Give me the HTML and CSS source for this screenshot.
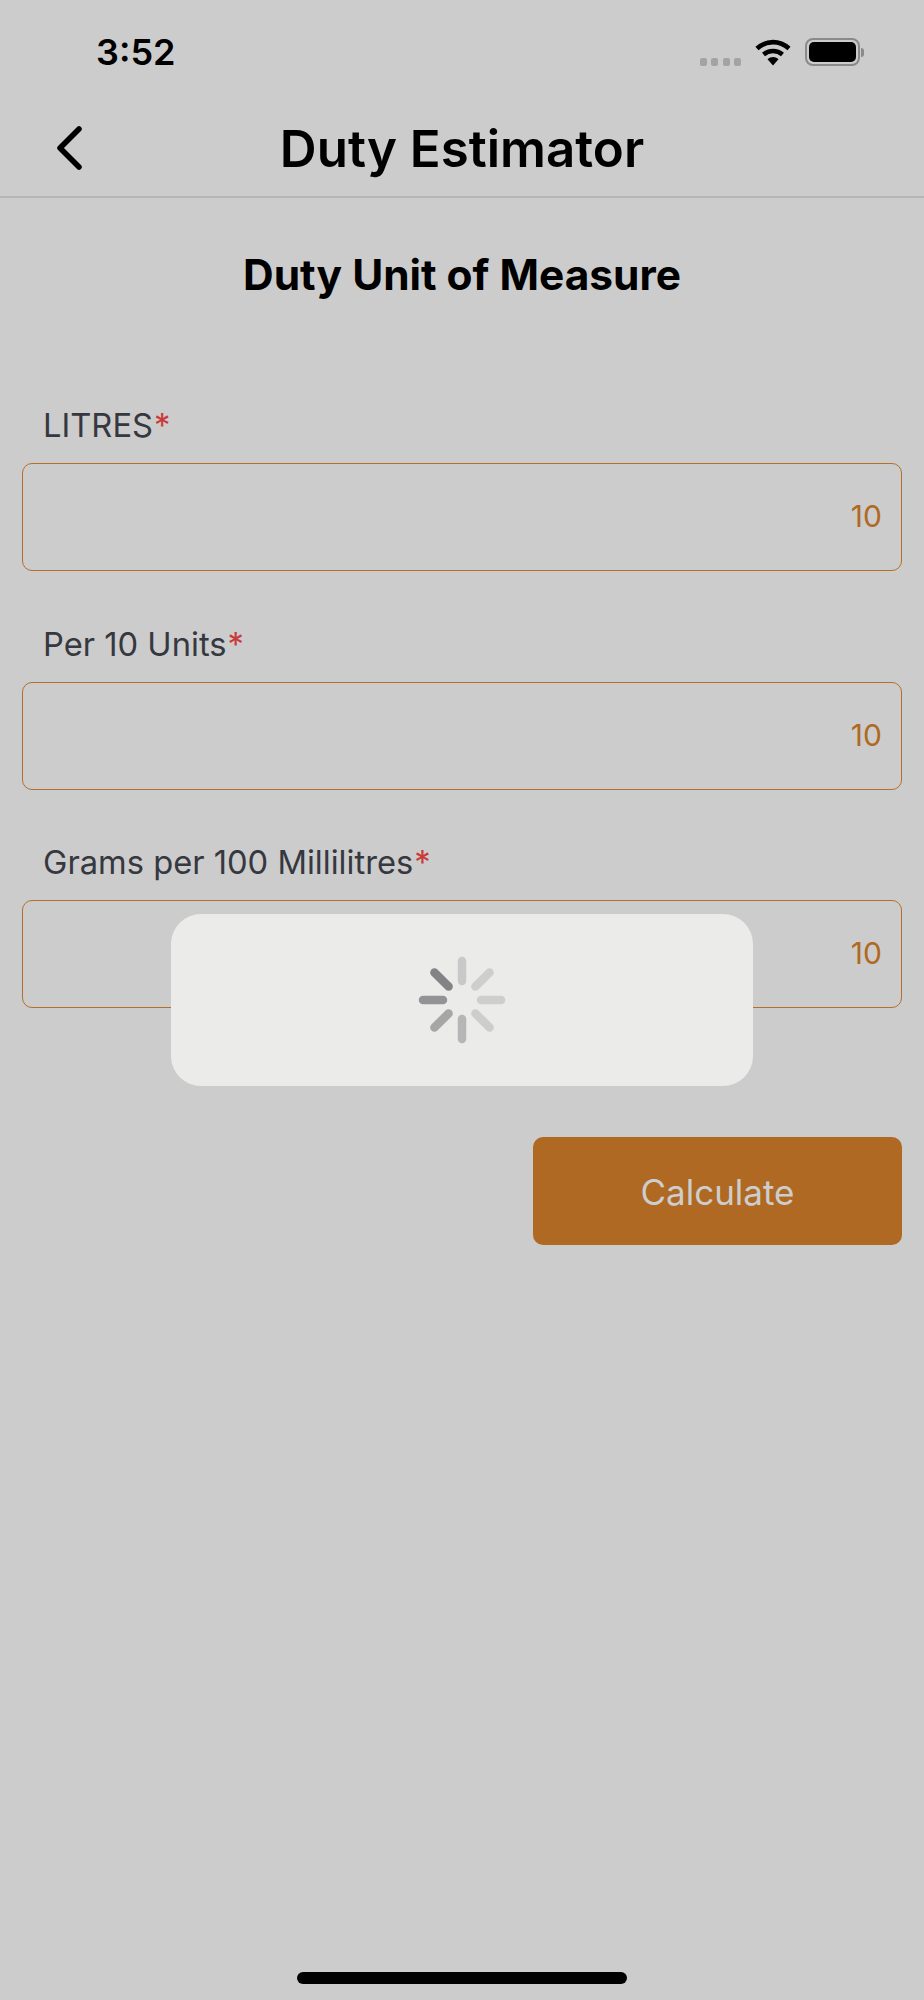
FILE: index.html
```html
<!DOCTYPE html>
<html lang="en">
<head>
    <meta charset="UTF-8">
    <meta name="viewport" content="width=device-width, initial-scale=1.0">
    <title>Duty Estimator</title>
    <link rel="stylesheet" href="styles.css">
</head>
<body>

<div class="screen">
    <div class="status-bar">
        <span class="time">3:52</span>
        <div class="status-icons">
            <div class="signal"><i></i><i></i><i></i><i></i></div>
            <svg class="wifi" width="36" height="27" viewBox="0 0 36 27">
                <path d="M2 9.5C11.5 1 24.500 1 34 9.500" fill="none" stroke="#000" stroke-width="4.600"/>
                <path d="M8.500 15.500C14 10.800 22 10.800 27.500 15.500" fill="none" stroke="#000" stroke-width="4.600"/>
                <path d="M12.500 20.200C15.800 17.300 20.200 17.300 23.500 20.200L18 26.500Z" fill="#000"/>
            </svg>
            <div class="battery"><div class="battery-level"></div></div>
            <div class="battery-tip"></div>
        </div>
    </div>

    <div class="nav-bar">
        <svg class="back" width="26" height="44" viewBox="0 0 26 44">
            <path d="M23 3L4 22L23 41" fill="none" stroke="#000" stroke-width="5.500" stroke-linecap="round" stroke-linejoin="round"/>
        </svg>
        <h1>Duty Estimator</h1>
    </div>

    <h2>Duty Unit of Measure</h2>

    <div class="form">
        <div class="input-group">
            <label for="litres">LITRES<span class="req">*</span></label>
            <input type="text" id="litres" value="10">
        </div>
        <div class="input-group">
            <label for="units">Per 10 Units<span class="req">*</span></label>
            <input type="text" id="units" value="10">
        </div>
        <div class="input-group">
            <label for="grams">Grams per 100 Millilitres<span class="req">*</span></label>
            <input type="text" id="grams" value="10">
        </div>
        <button>Calculate</button>
    </div>

    <div class="home-indicator"></div>

    <!-- loading popup sits over the form -->
    <div class="loader">
        <svg width="90" height="90" viewBox="-45 -45 90 90">
            <g stroke-width="8.500" stroke-linecap="round">
                <line y1="-19" y2="-39" stroke="#c9c9c9"/>
                <line y1="-19" y2="-39" stroke="#cecece" transform="rotate(45)"/>
                <line y1="-19" y2="-39" stroke="#cecece" transform="rotate(90)"/>
                <line y1="-19" y2="-39" stroke="#cdcdcd" transform="rotate(135)"/>
                <line y1="-19" y2="-39" stroke="#b6b6b6" transform="rotate(180)"/>
                <line y1="-19" y2="-39" stroke="#a6a6a7" transform="rotate(225)"/>
                <line y1="-19" y2="-39" stroke="#939396" transform="rotate(270)"/>
                <line y1="-19" y2="-39" stroke="#838386" transform="rotate(315)"/>
            </g>
        </svg>
    </div>
</div>

</body>
</html>
```

FILE: styles.css
```css
body {
    margin: 0;
    font-family: 'Inter', 'Liberation Sans', sans-serif;
    background-color: #cccccc;
}
.screen {
    position: relative;
    height: 2000px;
    display: flex;
    flex-direction: column;
    overflow: hidden;
}
.status-bar {
    height: 104px;
    display: flex;
    justify-content: space-between;
    align-items: flex-start;
    padding: 0 60px 0 96px;
    flex-shrink: 0;
    box-sizing: border-box;
}
.time {
    margin-top: 30px;
    font-size: 36px;
    line-height: 44px;
    font-weight: 600;
    color: #000;
}
.status-icons {
    display: flex;
    align-items: flex-start;
    margin-top: 38px;
}
.signal {
    display: flex;
    gap: 4.500px;
    margin-top: 20px;
    margin-right: 14px;
}
.signal i {
    width: 7px;
    height: 8px;
    border-radius: 2px;
    background-color: #a3a3a3;
}
.wifi {
    margin-top: 1px;
    margin-right: 14px;
}
.battery {
    width: 55px;
    height: 28px;
    box-sizing: border-box;
    border: 2px solid #8a8a8a;
    border-radius: 8px;
    padding: 2px;
}
.battery-level {
    height: 100%;
    background-color: #000;
    border-radius: 5px;
}
.battery-tip {
    width: 3px;
    height: 9px;
    margin-top: 10px;
    margin-left: 1px;
    background-color: #8a8a8a;
    border-radius: 0 4px 4px 0;
}
.nav-bar {
    height: 92px;
    position: relative;
    display: flex;
    justify-content: center;
    align-items: center;
    border-bottom: 2px solid #b6b6b6;
    flex-shrink: 0;
}
.back {
    position: absolute;
    left: 56px;
    top: 22px;
}
h1 {
    margin: 0 0 3px;
    font-size: 51px;
    font-weight: 600;
    color: #000;
}
h2 {
    margin: 0;
    padding-top: 53px;
    text-align: center;
    font-size: 42.400px;
    line-height: 48px;
    font-weight: 700;
    color: #000;
}
.form {
    display: flex;
    flex-direction: column;
    padding: 0 22px;
    margin-top: 107px;
}
.input-group {
    margin-bottom: 53.500px;
}
label {
    display: block;
    padding-left: 21px;
    margin-bottom: 18px;
    font-size: 32.700px;
    line-height: 39px;
    color: #36383f;
}
.req {
    margin-left: 1px;
    color: #c93a3a;
}
input {
    display: block;
    width: 100%;
    height: 108px;
    box-sizing: border-box;
    padding: 0 19px 2px;
    background: transparent;
    border: 1px solid #b47028;
    border-radius: 10px;
    font-family: inherit;
    font-size: 30px;
    text-align: right;
    color: #af6923;
    outline: none;
}
button {
    align-self: flex-end;
    width: 369px;
    height: 108px;
    margin-top: 75.500px;
    padding-top: 3px;
    background-color: #af6923;
    color: #cdcdcd;
    border: none;
    border-radius: 10px;
    font-family: inherit;
    font-size: 35px;
}
.home-indicator {
    width: 330px;
    height: 12px;
    margin: auto auto 16px;
    background-color: #000;
    border-radius: 6px;
}
.loader {
    position: absolute;
    left: 171px;
    top: 914px;
    width: 582px;
    height: 172px;
    display: flex;
    justify-content: center;
    align-items: center;
    background-color: #ebebea;
    border-radius: 30px;
}
```
